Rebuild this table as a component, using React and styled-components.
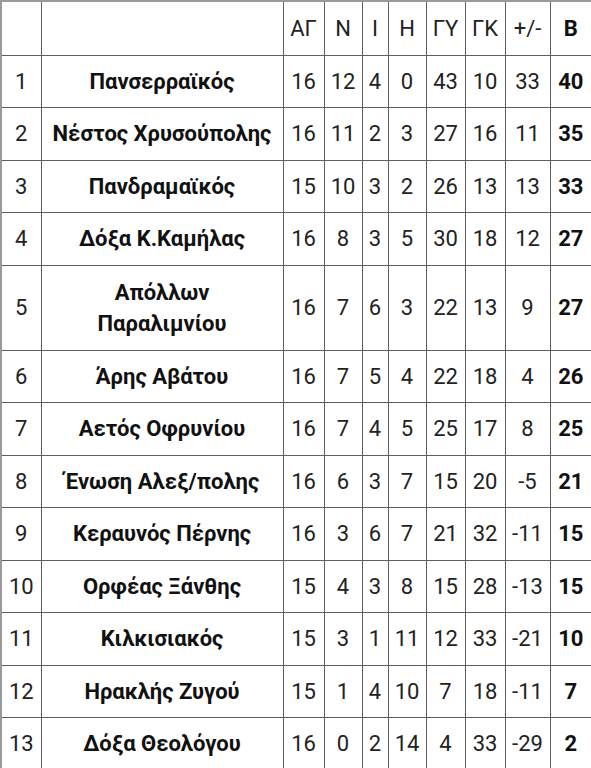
import React from 'react';
import styled, { createGlobalStyle } from 'styled-components';

const GlobalStyle = createGlobalStyle`
  html, body {
    margin: 0;
    padding: 0;
    background: #ffffff;
  }
  body {
    font-family: Roboto, "Noto Sans", "DejaVu Sans", sans-serif;
  }
`

const Table = styled.table`
  width: 591px;
  table-layout: fixed;
  border-collapse: collapse;
  border: 2px solid #9a9a9a;
  font-family: Roboto, "Noto Sans", sans-serif;
  font-size: 22px;
  color: #222;
`

const Col = styled.col`
  width: ${p => p.w}px;
`

const HeadRow = styled.tr`
  height: 54px;
`

const Row = styled.tr`
  height: ${p => (p.tall ? 85 : 52.5)}px;
`

const Cell = styled.td`
  border: 1px solid #5e5e5e;
  padding: 0 ${p => (p.wide ? 6 : 1)}px;
  text-align: center;
  vertical-align: middle;
  line-height: 31px;
  font-weight: ${p => (p.bold ? 700 : 400)};
  color: ${p => (p.bold ? '#111' : '#222')};
  white-space: ${p => (p.wide ? 'normal' : 'nowrap')};
`

const widths = [40, 242, 41, 38, 26, 38, 39, 40, 45, 42]
const heads = ['ΑΓ', 'Ν', 'Ι', 'Η', 'ΓΥ', 'ΓΚ', '+/-']

const teams = [
  ['Πανσερραϊκός', 16, 12, 4, 0, 43, 10, 33, 40],
  ['Νέστος Χρυσούπολης', 16, 11, 2, 3, 27, 16, 11, 35],
  ['Πανδραμαϊκός', 15, 10, 3, 2, 26, 13, 13, 33],
  ['Δόξα Κ.Καμήλας', 16, 8, 3, 5, 30, 18, 12, 27],
  ['Απόλλων Παραλιμνίου', 16, 7, 6, 3, 22, 13, 9, 27],
  ['Άρης Αβάτου', 16, 7, 5, 4, 22, 18, 4, 26],
  ['Αετός Οφρυνίου', 16, 7, 4, 5, 25, 17, 8, 25],
  ['Ένωση Αλεξ/πολης', 16, 6, 3, 7, 15, 20, -5, 21],
  ['Κεραυνός Πέρνης', 16, 3, 6, 7, 21, 32, -11, 15],
  ['Ορφέας Ξάνθης', 15, 4, 3, 8, 15, 28, -13, 15],
  ['Κιλκισιακός', 15, 3, 1, 11, 12, 33, -21, 10],
  ['Ηρακλής Ζυγού', 15, 1, 4, 10, 7, 18, -11, 7],
  ['Δόξα Θεολόγου', 16, 0, 2, 14, 4, 33, -29, 2],
]

export default function App() {
  return (
    <>
      <GlobalStyle />
      <Table>
        <colgroup>
          {widths.map((w, i) => <Col key={i} w={w} />)}
        </colgroup>
        <thead>
          <HeadRow>
            <Cell />
            <Cell wide />
            {heads.map(h => <Cell key={h}>{h}</Cell>)}
            <Cell bold>Β</Cell>
          </HeadRow>
        </thead>
        <tbody>
          {teams.map(([name, ...nums], i) => (
            <Row key={name} tall={name.length > 18}>
              <Cell>{i + 1}</Cell>
              <Cell wide bold>{name}</Cell>
              {nums.slice(0, 7).map((n, j) => <Cell key={j}>{n}</Cell>)}
              <Cell bold>{nums[7]}</Cell>
            </Row>
          ))}
        </tbody>
      </Table>
    </>
  )
}
